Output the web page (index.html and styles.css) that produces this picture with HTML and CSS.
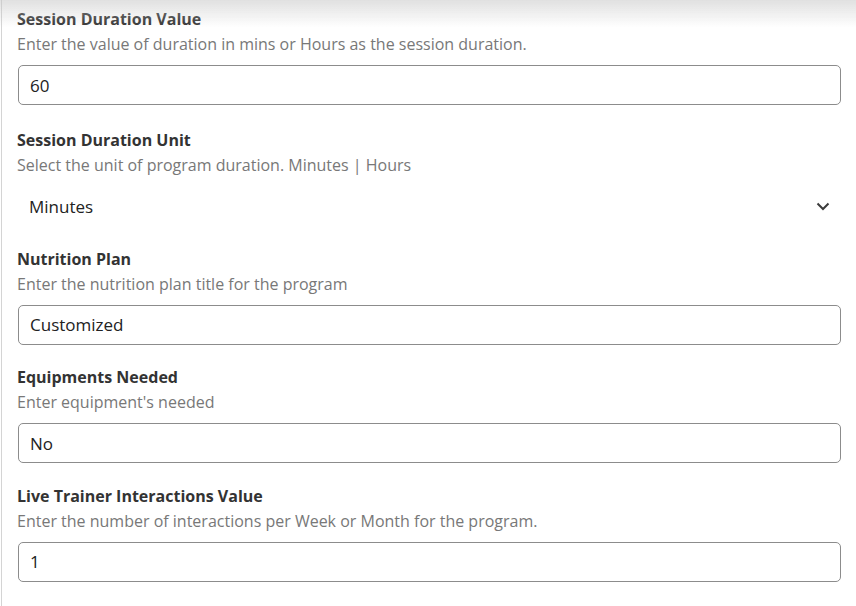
FILE: index.html
```html
<!DOCTYPE html>
<html>
<head>
<meta charset="utf-8">
<link rel="stylesheet" href="styles.css">
</head>
<body>
<div class="topshade"></div>
<main class="panel">
  <div class="field">
    <label class="label">Session Duration Value</label>
    <p class="hint">Enter the value of duration in mins or Hours as the session duration.</p>
    <div class="input">60</div>
  </div>
  <div class="field">
    <label class="label">Session Duration Unit</label>
    <p class="hint">Select the unit of program duration. Minutes | Hours</p>
    <div class="select">
      <span>Minutes</span>
      <svg class="chev" width="14" height="9" viewBox="0 0 14 9"><path d="M1.5 1.5 L7 7 L12.5 1.5" fill="none" stroke="#3c3c3c" stroke-width="2"/></svg>
    </div>
  </div>
  <div class="field">
    <label class="label">Nutrition Plan</label>
    <p class="hint">Enter the nutrition plan title for the program</p>
    <div class="input">Customized</div>
  </div>
  <div class="field">
    <label class="label">Equipments Needed</label>
    <p class="hint">Enter equipment's needed</p>
    <div class="input">No</div>
  </div>
  <div class="field">
    <label class="label">Live Trainer Interactions Value</label>
    <p class="hint">Enter the number of interactions per Week or Month for the program.</p>
    <div class="input">1</div>
  </div>
</main>
</body>
</html>
```
FILE: styles.css
```css
html, body {
  margin: 0;
  padding: 0;
  background: #fff;
  height: 100%;
}
body {
  font-family: "Open Sans", "Noto Sans", sans-serif;
  font-size: 16px;
  color: #333;
  overflow: hidden;
}
.topshade {
  position: fixed;
  left: 0;
  right: 0;
  top: 0;
  height: 28px;
  background: linear-gradient(to bottom, rgba(200,200,200,0.55), rgba(255,255,255,0));
  pointer-events: none;
}
.panel {
  margin-left: 1px;
  border-left: 1px solid #d4d4d4;
  min-height: 100%;
  padding: 7px 15px 0 16px;
  box-sizing: border-box;
}
.field {
  display: flex;
  flex-direction: column;
  margin-bottom: 20.5px;
}
.field:first-child {
  margin-bottom: 23px;
}
.label {
  display: block;
  font-weight: 700;
  line-height: 24px;
  color: #333;
  margin-left: -1px;
}
.hint {
  margin: 1px 0 0 -1px;
  line-height: 24px;
  color: #787878;
}
.input {
  margin-top: 9px;
  height: 40px;
  box-sizing: border-box;
  border: 1px solid #8c8c8c;
  border-radius: 5px;
  padding: 0 11px;
  display: flex;
  align-items: center;
  font-size: 17px;
  color: #222;
}
.select {
  margin-top: 9px;
  height: 40px;
  box-sizing: border-box;
  padding: 0 11px 0 11px;
  display: flex;
  align-items: center;
  justify-content: space-between;
  font-size: 17px;
  color: #222;
}
.chev {
  margin-right: 0;
}
```
